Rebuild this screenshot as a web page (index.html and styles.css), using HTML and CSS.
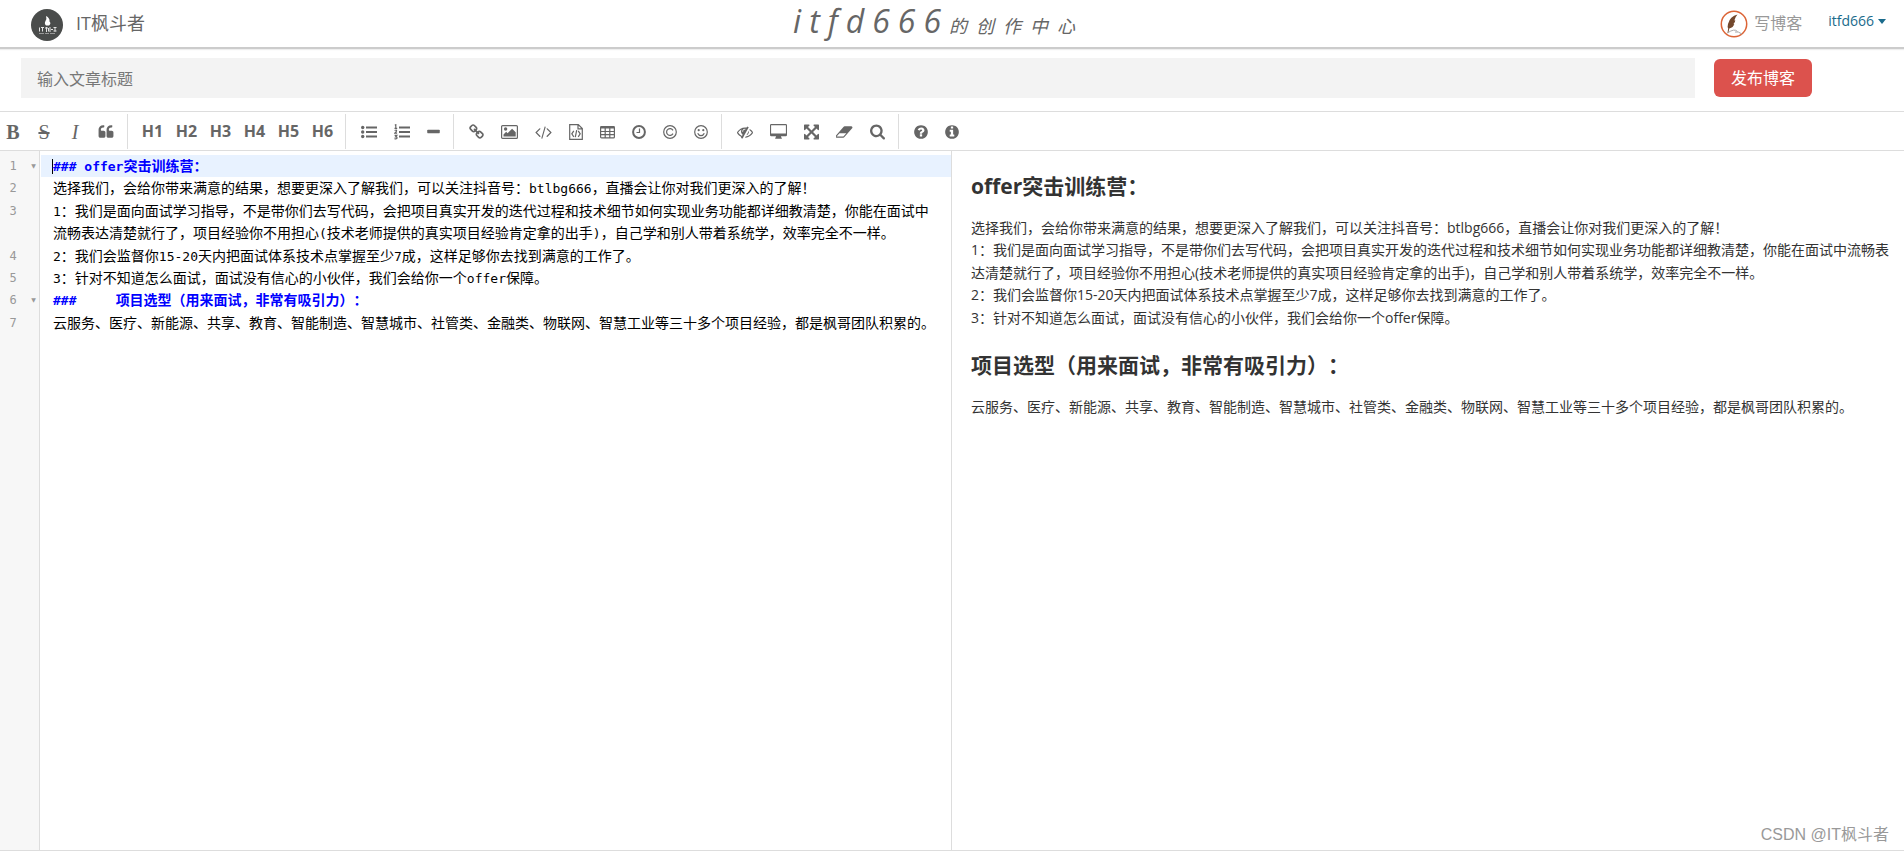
FILE: index.html
```html
<!DOCTYPE html>
<html lang="zh-CN">
<head>
<meta charset="utf-8">
<title>写博客 - IT枫斗者</title>
<link rel="stylesheet" href="styles.css">
</head>
<body>
<header class="topbar">
  <a class="brand" href="#">
    <svg class="brand-logo" viewBox="0 0 32 32" aria-hidden="true">
      <circle cx="16" cy="16" r="16" fill="#4a4c4b"/>
      <path fill="#fff" d="M15 7q4 2 3.500 5.500q2 2-.5 4h-3q-2-2-.5-4.500q1.500-2 .5-5z"/>
      <path stroke="#e4e4e4" fill="none" d="M8.500 18.500v4M10 18.500h3M11.500 18.500v4M14 19h3M15.500 18v5M17.500 19v3.500M19 18v5M20 20.500h2M22.500 18.500h3M24 18v4.500M22.500 22h3"/>
      <path stroke="#999" fill="none" d="M8 24.500h5M14 24.500h4M19 24.500h5"/>
    </svg>
    <span>IT枫斗者</span>
  </a>
  <h1 class="center-title">itfd666<small>的创作中心</small></h1>
  <nav class="user-nav">
    <a class="write-link" href="#">
      <svg class="write-icon" viewBox="0 0 28 28" aria-hidden="true">
        <circle cx="14" cy="14" r="12.700" fill="#fff" stroke="#dc6436" stroke-width="1.500"/>
        <path fill="#73482c" d="M17.500 4.500Q10 6 8 14q-.8 3 .2 4.500l-.7 4.500h.8l1-4.500q4-1 5-4.500l-1 .2q2-2 2-4l-1 .2q1.200-3.700 3.200-5.900z"/>
        <path fill="none" stroke="#aaa" d="M7.500 23q7-5 10-1.500M15 22q3-1 7 2"/>
      </svg>
      <span>写博客</span>
    </a>
    <button class="user-menu" type="button">itfd666<span class="caret"></span></button>
  </nav>
</header>

<main class="writer">
  <form class="title-row">
    <input class="title-input" type="text" aria-label="文章标题" placeholder="输入文章标题">
    <button class="publish" type="button">发布博客</button>
  </form>

  <div class="toolbar" role="toolbar" aria-label="编辑工具">
    <div class="tools">
      <button class="tool w12 serif" type="button" title="粗体"><b>B</b></button>
      <button class="tool w16 serif" type="button" title="删除线"><s>S</s></button>
      <button class="tool w12 serif" type="button" title="斜体"><i>I</i></button>
      <button class="tool w16" type="button" title="引用"><svg viewBox="64 0 1664 1792" aria-hidden="true"><path d="M832 960v384q0 80-56 136t-136 56h-384q-80 0-136-56t-56-136v-704q0-104 40.500-198.500t109.500-163.500 163.500-109.500 198.500-40.500h64q26 0 45 19t19 45v128q0 26-19 45t-45 19h-64q-106 0-181 75t-75 181v32q0 40 28 68t68 28h224q80 0 136 56t56 136zm896 0v384q0 80-56 136t-136 56h-384q-80 0-136-56t-56-136v-704q0-104 40.500-198.500t109.500-163.500 163.500-109.500 198.500-40.500h64q26 0 45 19t19 45v128q0 26-19 45t-45 19h-64q-106 0-181 75t-75 181v32q0 40 28 68t68 28h224q80 0 136 56t56 136z"/></svg></button>
    </div>
    <div class="tools headings">
      <button class="tool" type="button">H1</button>
      <button class="tool" type="button">H2</button>
      <button class="tool" type="button">H3</button>
      <button class="tool" type="button">H4</button>
      <button class="tool" type="button">H5</button>
      <button class="tool" type="button">H6</button>
    </div>
    <div class="tools">
      <button class="tool w16" type="button" title="无序列表"><svg viewBox="0 0 16 16" aria-hidden="true"><circle cx="1.700" cy="3.500" r="1.700"/><circle cx="1.700" cy="8" r="1.700"/><circle cx="1.700" cy="12.500" r="1.700"/><path d="M5 2.500h11v2H5zM5 7h11v2H5zM5 11.500h11v2H5z"/></svg></button>
      <button class="tool w16" type="button" title="有序列表"><svg viewBox="0 0 16 16" aria-hidden="true"><path d="M5 2.500h11v2H5zM5 7h11v2H5zM5 11.500h11v2H5z"/><path class="line" d="M.8 1.200l1-.5v3.600M.5 4.300h2.700M.6 6.600q2-1.200 2 .1Q2.500 7.600.8 9.100h2.300M.6 11.400h2.200l-1.200 1.400q1.500 0 1.400 1-.2 1.500-2.500.8"/></svg></button>
      <button class="tool w13" type="button" title="横线"><svg viewBox="192 0 1408 1792" aria-hidden="true"><path d="M1600 736v192q0 40-28 68t-68 28h-1216q-40 0-68-28t-28-68v-192q0-40 28-68t68-28h1216q40 0 68 28t28 68z"/></svg></button>
    </div>
    <div class="tools">
      <button class="tool w15" type="button" title="链接"><svg viewBox="64 0 1664 1792" aria-hidden="true"><path d="M1520 1216q0-40-28-68l-208-208q-28-28-68-28-42 0-72 32 3 3 19 18.500t21.500 21.500 15 19 13 25.500 3.500 27.500q0 40-28 68t-68 28q-15 0-27.500-3.500t-25.500-13-19-15-21.500-21.500-18.500-19q-33 31-33 73 0 40 28 68l206 207q27 27 68 27 40 0 68-26l147-146q28-28 28-67zm-703-705q0-40-28-68l-206-207q-28-28-68-28-39 0-68 27l-147 146q-28 28-28 67 0 40 28 68l208 208q27 27 68 27 42 0 72-31-3-3-19-18.500t-21.500-21.500-15-19-13-25.500-3.500-27.500q0-40 28-68t68-28q15 0 27.500 3.500t25.500 13 19 15 21.500 21.500 18.500 19q33-31 33-73zm895 705q0 120-85 203l-147 146q-83 83-203 83-121 0-204-85l-206-207q-83-83-83-203 0-123 88-209l-88-88q-86 88-208 88-120 0-204-84l-208-208q-84-84-84-204t85-203l147-146q83-83 203-83 121 0 204 85l206 207q83 83 83 203 0 123-88 209l88 88q86-88 208-88 120 0 204 84l208 208q84 84 84 204z"/></svg></button>
      <button class="tool w17" type="button" title="图片"><svg viewBox="0 0 17 16" aria-hidden="true"><rect class="line" x=".6" y="1.600" width="15.800" height="12.800" rx="1"/><circle cx="4.600" cy="5" r="1.700"/><path d="M2.500 12.500v-2l2.700-2.700 1.400 1.400 4.500-4.500 3.600 3.600v4.200z"/></svg></button>
      <button class="tool w17" type="button" title="行内代码"><svg viewBox="0 0 1920 1792" aria-hidden="true"><path d="M617 1399l-50 50q-10 10-23 10t-23-10l-466-466q-10-10-10-23t10-23l466-466q10-10 23-10t23 10l50 50q10 10 10 23t-10 23l-393 393 393 393q10 10 10 23t-10 23zm591-1067l-373 1291q-4 13-15.500 19.500t-23.500 2.500l-62-17q-13-4-19.500-15.500t-2.500-24.500l373-1291q4-13 15.500-19.500t23.500-2.500l62 17q13 4 19.500 15.500t2.500 24.500zm657 651l-466 466q-10 10-23 10t-23-10l-50-50q-10-10-10-23t10-23l393-393-393-393q-10-10-10-23t10-23l50-50q10-10 23-10t23 10l466 466q10 10 10 23t-10 23z"/></svg></button>
      <button class="tool w14" type="button" title="代码块"><svg viewBox="0 0 14 16" aria-hidden="true"><path class="line" d="M.7.600h8.600l4 4v10.800H.7zM9 .6v4.300h4.300M4.800 6.800l-2 3 2 3M9.200 6.800l2 3-2 3M7.700 6.200l-1.400 7"/></svg></button>
      <button class="tool w15" type="button" title="表格"><svg viewBox="0 0 15 16" aria-hidden="true"><rect class="line" x=".6" y="2.600" width="13.800" height="11.300" rx="1"/><path d="M.6 2h13.800v2.500H.6z"/><path class="line" d="M.6 7.500h13.800M.6 10.700h13.800M5.200 4v10M9.800 4v10"/></svg></button>
      <button class="tool w14" type="button" title="日期时间"><svg viewBox="0 0 14 16" aria-hidden="true"><circle class="line thick" cx="7" cy="8" r="5.900"/><path class="line" d="M7.500 4.500v4H4.500"/></svg></button>
      <button class="tool w14" type="button" title="特殊符号"><svg viewBox="0 0 14 16" aria-hidden="true"><circle class="line" cx="7" cy="8" r="6.300"/><path class="line" d="M10 6.400A3.400 3.400 0 1 0 10 9.600"/></svg></button>
      <button class="tool w14" type="button" title="表情"><svg viewBox="0 0 14 16" aria-hidden="true"><circle class="line" cx="7" cy="8" r="6.300"/><circle cx="4.700" cy="6.200" r="1.100"/><circle cx="9.300" cy="6.200" r="1.100"/><path class="line" d="M3.700 9.300q1 2.400 3.300 2.400t3.300-2.400"/></svg></button>
    </div>
    <div class="tools">
      <button class="tool w16" type="button" title="关闭预览"><svg viewBox="0 0 1792 1792" aria-hidden="true"><path d="M555 1335l78-141q-87-63-136-159t-49-203q0-121 61-225-229 117-381 353 167 258 427 375zm389-759q0-20-14-34t-34-14q-125 0-214.500 89.500t-89.500 214.500q0 20 14 34t34 14 34-14 14-34q0-86 61-147t147-61q20 0 34-14t14-34zm363-191q0 7-1 9-106 189-316 567t-315 566l-49 89q-10 16-28 16-12 0-134-70-16-10-16-28 0-12 44-87-143-65-263.500-173t-208.500-245q-20-31-20-69t20-69q153-235 380-371t496-136q89 0 180 17l54-97q10-16 28-16 5 0 18 6t31 15.500 33 18.500 31.500 18.500 19.500 11.500q16 10 16 27zm37 447q0 139-79 253.500t-209 164.500l280-502q8 45 8 84zm448 128q0 35-20 69-39 64-109 145-150 172-347.500 267t-419.500 95l74-132q212-18 392.500-137t301.500-307q-115-179-282-294l63-112q95 64 182.500 153t144.500 184q20 34 20 69z"/></svg></button>
      <button class="tool w17" type="button" title="全窗口预览"><svg viewBox="0 0 17 16" aria-hidden="true"><path fill-rule="evenodd" d="M1.300 0h14.400q1.300 0 1.300 1.300v9.700q0 1.300-1.300 1.300H11q0 1 .8 1.800v.6H5.200v-.6q.8-.8.8-1.800H1.300Q0 12.300 0 11V1.300Q0 0 1.300 0zM1.100 1.200v8.200h14.800V1.200z"/></svg></button>
      <button class="tool w15" type="button" title="全屏"><svg viewBox="128 128 1536 1536" aria-hidden="true"><path d="M1411 541l-355 355 355 355 144-144q29-31 70-14 39 17 39 59v448q0 26-19 45t-45 19h-448q-42 0-59-40-17-39 14-69l144-144-355-355-355 355 144 144q31 30 14 69-17 40-59 40h-448q-26 0-45-19t-19-45v-448q0-42 40-59 39-17 69 14l144 144 355-355-355-355-144 144q-19 19-45 19-12 0-24-5-40-17-40-59v-448q0-26 19-45t45-19h448q42 0 59 40 17 39-14 69l-144 144 355 355 355-355-144-144q-31-30-14-69 17-40 59-40h448q26 0 45 19t19 45v448q0 42-39 59-13 5-25 5-26 0-45-19z"/></svg></button>
      <button class="tool w17" type="button" title="清空"><svg viewBox="0 0 1920 1792" aria-hidden="true"><path d="M832 1408l336-384h-768l-336 384h768zm1013-1077q15 34 9.500 71.500t-30.500 65.500l-896 1024q-38 44-96 44h-768q-38 0-69.500-20.500t-47.500-54.500q-15-34-9.500-71.500t30.500-65.500l896-1024q38-44 96-44h768q38 0 69.500 20.500t47.500 54.500z"/></svg></button>
      <button class="tool w15" type="button" title="搜索"><svg viewBox="64 128 1664 1664" aria-hidden="true"><path d="M1216 832q0-185-131.500-316.500t-316.500-131.500-316.500 131.500-131.500 316.500 131.500 316.500 316.500 131.500 316.500-131.500 131.500-316.500zm512 832q0 52-38 90t-90 38q-54 0-90-38l-343-342q-179 124-399 124-143 0-273.500-55.500t-225-150-150-225-55.500-273.500 55.500-273.500 150-225 225-150 273.500-55.500 273.500 55.500 225 150 150 225 55.500 273.500q0 220-124 399l343 343q37 37 37 90z"/></svg></button>
    </div>
    <div class="tools">
      <button class="tool w14" type="button" title="帮助"><svg viewBox="128 0 1536 1792" aria-hidden="true"><path d="M1024 1376v-192q0-14-9-23t-23-9h-192q-14 0-23 9t-9 23v192q0 14 9 23t23 9h192q14 0 23-9t9-23zm256-672q0-88-55.500-163t-138.500-116-170-41q-243 0-371 213-15 24 8 42l132 100q7 6 19 6 16 0 25-12 53-68 86-92 34-24 86-24 48 0 85.500 26t37.500 59q0 38-20 61t-68 45q-63 28-115.500 86.500t-52.500 125.500v36q0 14 9 23t23 9h192q14 0 23-9t9-23q0-19 21.500-49.500t54.500-49.500q32-18 49-28.500t46-35 44.500-48 28-60.500 12.500-81zm384 192q0 209-103 385.500t-279.500 279.500-385.500 103-385.500-103-279.500-279.500-103-385.500 103-385.500 279.500-279.500 385.500-103 385.500 103 279.500 279.500 103 385.500z"/></svg></button>
      <button class="tool w14" type="button" title="关于"><svg viewBox="128 0 1536 1792" aria-hidden="true"><path d="M1152 1376v-160q0-14-9-23t-23-9h-96v-512q0-14-9-23t-23-9h-320q-14 0-23 9t-9 23v160q0 14 9 23t23 9h96v320h-96q-14 0-23 9t-9 23v160q0 14 9 23t23 9h448q14 0 23-9t9-23zm-128-896v-160q0-14-9-23t-23-9h-192q-14 0-23 9t-9 23v160q0 14 9 23t23 9h192q14 0 23-9t9-23zm640 416q0 209-103 385.500t-279.500 279.500-385.500 103-385.500-103-279.500-279.500-103-385.500 103-385.500 279.500-279.500 385.500-103 385.500 103 279.500 279.500 103 385.500z"/></svg></button>
    </div>
  </div>

  <div class="editor">
    <div class="source">
      <div class="line-row active"><span class="num">1</span><span class="fold">▼</span><div class="code heading"><span class="mono">### offer</span>突击训练营：</div></div>
      <div class="line-row"><span class="num">2</span><span class="fold"></span><div class="code">选择我们，会给你带来满意的结果，想要更深入了解我们，可以关注抖音号：<span class="mono">btlbg666</span>，直播会让你对我们更深入的了解！</div></div>
      <div class="line-row"><span class="num">3</span><span class="fold"></span><div class="code"><span class="mono">1</span>：我们是面向面试学习指导，不是带你们去写代码，会把项目真实开发的迭代过程和技术细节如何实现业务功能都详细教清楚，你能在面试中流畅表达清楚就行了，项目经验你不用担心<span class="mono">(</span>技术老师提供的真实项目经验肯定拿的出手<span class="mono">)</span>，自己学和别人带着系统学，效率完全不一样。</div></div>
      <div class="line-row"><span class="num">4</span><span class="fold"></span><div class="code"><span class="mono">2</span>：我们会监督你<span class="mono">15-20</span>天内把面试体系技术点掌握至少<span class="mono">7</span>成，这样足够你去找到满意的工作了。</div></div>
      <div class="line-row"><span class="num">5</span><span class="fold"></span><div class="code"><span class="mono">3</span>：针对不知道怎么面试，面试没有信心的小伙伴，我们会给你一个<span class="mono">offer</span>保障。</div></div>
      <div class="line-row"><span class="num">6</span><span class="fold">▼</span><div class="code heading"><span class="mono">###     </span>项目选型（用来面试，非常有吸引力）：</div></div>
      <div class="line-row"><span class="num">7</span><span class="fold"></span><div class="code">云服务、医疗、新能源、共享、教育、智能制造、智慧城市、社管类、金融类、物联网、智慧工业等三十多个项目经验，都是枫哥团队积累的。</div></div>
    </div>
    <article class="preview">
      <h3>offer突击训练营：</h3>
      <p>选择我们，会给你带来满意的结果，想要更深入了解我们，可以关注抖音号：btlbg666，直播会让你对我们更深入的了解！<br>1：我们是面向面试学习指导，不是带你们去写代码，会把项目真实开发的迭代过程和技术细节如何实现业务功能都详细教清楚，你能在面试中流畅表达清楚就行了，项目经验你不用担心(技术老师提供的真实项目经验肯定拿的出手)，自己学和别人带着系统学，效率完全不一样。<br>2：我们会监督你15-20天内把面试体系技术点掌握至少7成，这样足够你去找到满意的工作了。<br>3：针对不知道怎么面试，面试没有信心的小伙伴，我们会给你一个offer保障。</p>
      <h3>项目选型（用来面试，非常有吸引力）：</h3>
      <p>云服务、医疗、新能源、共享、教育、智能制造、智慧城市、社管类、金融类、物联网、智慧工业等三十多个项目经验，都是枫哥团队积累的。</p>
    </article>
    <div class="watermark">CSDN @IT枫斗者</div>
  </div>
</main>
</body>
</html>
```
FILE: styles.css
```css
* { box-sizing: border-box; }

body {
  margin: 0;
  min-height: 100vh;
  display: flex;
  flex-direction: column;
  background: #fff;
  color: #333;
  font: 14px/1.6 "Open Sans", "Noto Sans CJK SC", sans-serif;
  text-spacing-trim: space-all;
}

button, input { font: inherit; }
a { color: inherit; text-decoration: none; }

.topbar {
  display: flex;
  align-items: center;
  justify-content: space-between;
  height: 49px;
  padding: 0 18px 0 31px;
  border-bottom: 2px solid #ccc;
  box-shadow: 0 1px 1px #eee;
  color: #666;
}

.brand {
  display: flex;
  align-items: center;
  gap: 13px;
  font-size: 18px;
  line-height: 24px;
}

.brand-logo { width: 32px; height: 32px; margin-top: 3px; }
.brand span, .write-link span { padding-bottom: 2px; }

.center-title {
  margin: 0 0 0 12px;
  font-size: 32px;
  font-weight: 400;
  font-style: italic;
  line-height: 46px;
  letter-spacing: 8px;
}

.center-title small { font-size: 18px; letter-spacing: 9px; }

.user-nav { display: flex; align-items: center; gap: 26px; }

.write-link {
  display: flex;
  align-items: center;
  gap: 6px;
  color: #999;
  font-size: 16px;
  line-height: 24px;
}

.write-icon { width: 28px; height: 28px; }

.user-menu {
  display: flex;
  align-items: center;
  gap: 4px;
  padding: 0 0 4px;
  border: 0;
  background: none;
  color: #1a6b8c;
}

.caret {
  border: 4px solid transparent;
  border-top: 5px solid;
  border-bottom: 0;
}

.writer { flex: 1; display: flex; flex-direction: column; }

.title-row {
  display: flex;
  align-items: center;
  gap: 19px;
  padding: 9px 92px 13px 21px;
}

.title-input {
  flex: 1;
  height: 40px;
  padding: 2px 16px 0;
  border: 0;
  background: #f3f3f3;
  color: #555;
  font-size: 16px;
}

.title-input::placeholder { color: #777; }

.publish {
  height: 38px;
  padding: 2px 17px 0;
  border: 0;
  border-radius: 6px;
  background: #dc524d;
  color: #fff;
  font-size: 16px;
}

.toolbar {
  display: flex;
  height: 40px;
  padding: 2px 0 1px;
  border: solid #ddd;
  border-width: 1px 0;
}

.tools {
  display: flex;
  align-items: center;
  gap: 17px;
  padding: 0 13px 0 15px;
  border-right: 1px solid #ddd;
}

.tools:first-child { padding-left: 7px; }
.tools:last-child { border-right: 0; }

.tool {
  display: flex;
  align-items: center;
  justify-content: center;
  height: 24px;
  padding: 0;
  border: 0;
  background: none;
  color: #666;
}

.tool svg { width: 100%; height: 16px; fill: currentColor; }
.tool .line { fill: none; stroke: currentColor; stroke-width: 1.2; }
.tool .thick { stroke-width: 2; }

.w12 { width: 12px; }
.w13 { width: 13px; }
.w14 { width: 14px; }
.w15 { width: 15px; }
.w16 { width: 16px; }
.w17 { width: 17px; }

.serif { font: 20px/24px "Liberation Serif", serif; }

.headings { gap: 13px; padding: 0 12px 0 14px; }
.headings .tool { width: 21px; font-size: 16px; font-weight: 700; }

.editor {
  position: relative;
  flex: 1;
  display: grid;
  grid-template-columns: 1fr 1fr;
  margin-bottom: 1px;
  border-bottom: 1px solid #ddd;
}

.source {
  padding-top: 4px;
  border-right: 1px solid #ddd;
  background: linear-gradient(to right, #f7f7f7 39px, #ddd 39px, #ddd 40px, #fff 40px);
  color: #000;
}

.line-row { display: grid; grid-template-columns: 26px 15px 1fr; }

.num {
  color: #999;
  font: 12px/22px "DejaVu Sans Mono", monospace;
  text-align: center;
}

.fold {
  color: #999;
  font: 6px/22px "DejaVu Sans", sans-serif;
  text-align: center;
}

.code { padding: 0 14px 0 12px; }
.active .code { background: #e8f2ff; }
.active .mono { box-shadow: -1px 0 #000; }
.heading { color: #00f; font-weight: 700; }

.mono {
  font-family: "DejaVu Sans Mono", monospace;
  font-size: 13px;
  line-height: 1;
  white-space: pre-wrap;
}

.preview { padding: 20px 10px 20px 19px; }
.preview h3 { margin: 0 0 16px; font-size: 21px; line-height: 30px; }
.preview p { margin: 0 0 21px; }

.watermark {
  position: absolute;
  right: 15px;
  bottom: 3px;
  color: #999;
  font: 16px/24px "Liberation Sans", "Noto Sans CJK SC", sans-serif;
}
```
